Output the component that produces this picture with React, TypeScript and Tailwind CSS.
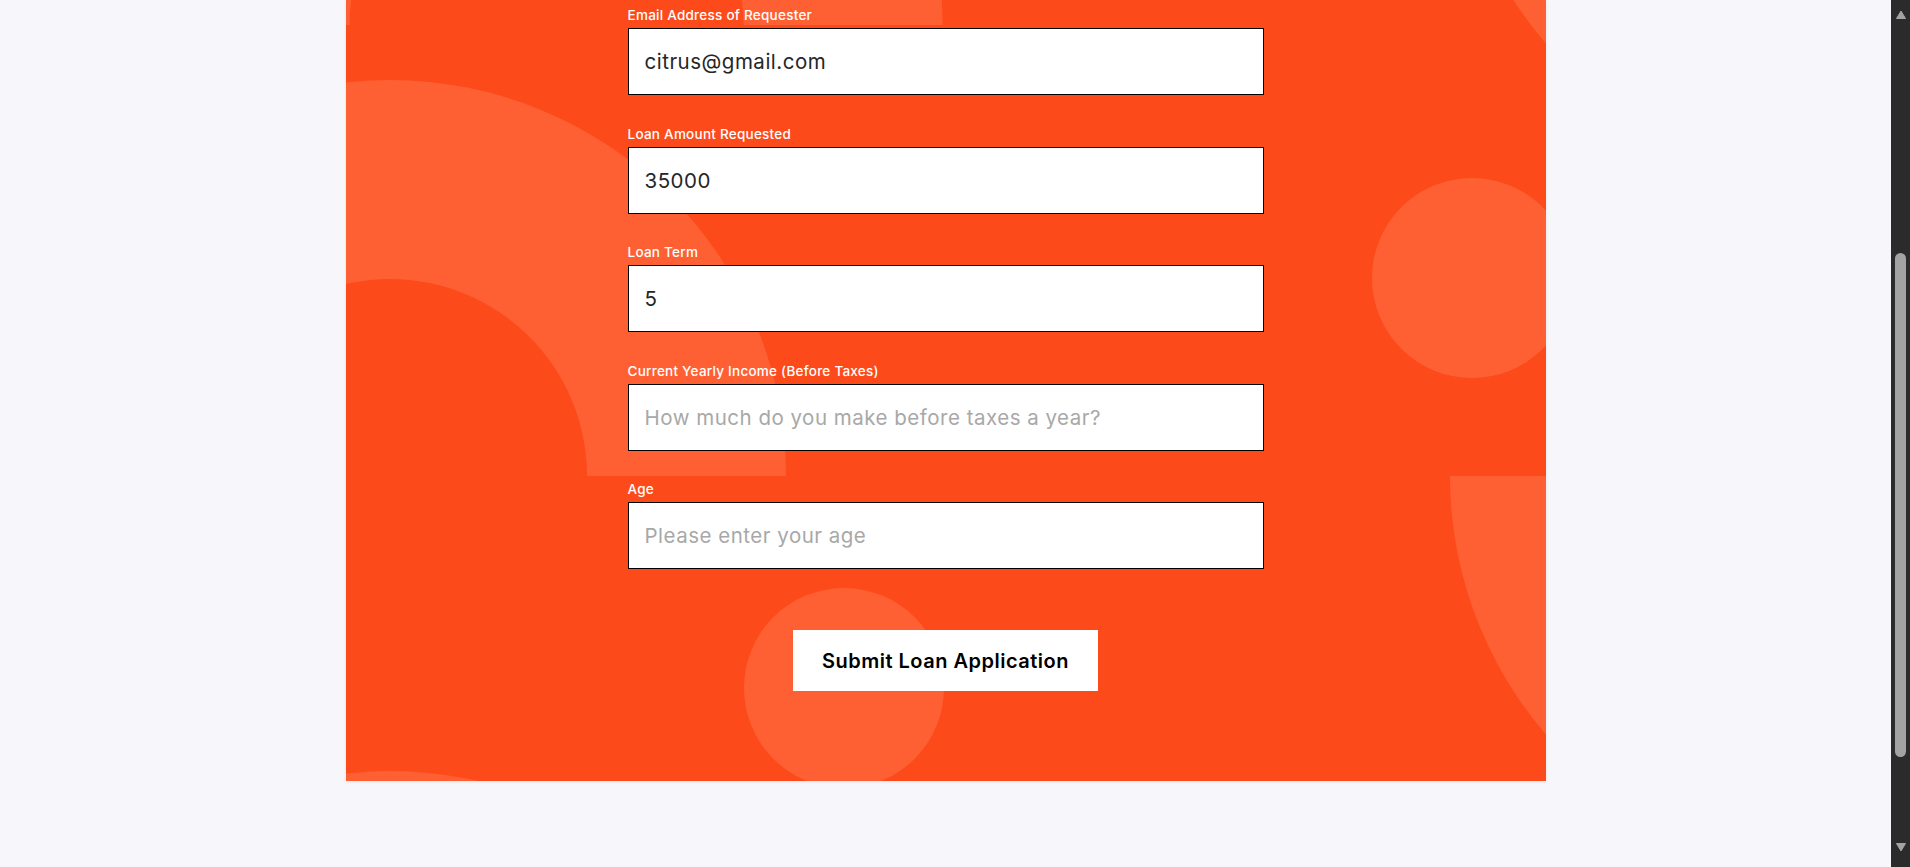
import React from "react";

const fields: { label: string; value?: string; placeholder?: string }[] = [
  { label: "Email Address of Requester", value: "citrus@gmail.com" },
  { label: "Loan Amount Requested", value: "35000" },
  { label: "Loan Term", value: "5" },
  { label: "Current Yearly Income (Before Taxes)", placeholder: "How much do you make before taxes a year?" },
  { label: "Age", placeholder: "Please enter your age" },
];

function Shapes() {
  return (
    <svg
      className="absolute inset-0 w-full h-full"
      viewBox="0 0 1200 781"
      preserveAspectRatio="none"
      aria-hidden="true"
    >
      <g fill="#fe6034">
        <path d="M -195.5 25 A 396 396 0 0 1 596.5 25 L 397.5 25 A 197 197 0 0 0 3.5 25 Z" />
        <path d="M -352 476 A 396 396 0 0 1 440 476 L 241 476 A 197 197 0 0 0 -153 476 Z" />
        <path d="M -352 1167 A 396 396 0 0 1 440 1167 L 241 1167 A 197 197 0 0 0 -153 1167 Z" />
        <path d="M 1104 476 A 396 396 0 0 0 1896 476 L 1697 476 A 197 197 0 0 1 1303 476 Z" />
        <path d="M 1104 -215 A 396 396 0 0 0 1896 -215 L 1697 -215 A 197 197 0 0 1 1303 -215 Z" />
        <circle cx="1126" cy="278" r="100" />
        <circle cx="498" cy="688" r="100" />
      </g>
    </svg>
  );
}

function ScrollBar() {
  return (
    <div className="w-[19px] h-full bg-[#2b2b2b] flex flex-col items-center shrink-0">
      <svg className="mt-[10px] w-[10px] h-[9px]" viewBox="0 0 10 9">
        <path d="M5 1 L9.5 8.5 L0.5 8.5 Z" fill="#a3a3a3" stroke="#a3a3a3" strokeLinejoin="round" strokeWidth="1" />
      </svg>
      <div className="mt-[234px] w-[11px] h-[504px] rounded-full bg-[#a3a3a3]" />
      <svg className="mt-[86px] w-[10px] h-[9px]" viewBox="0 0 10 9">
        <path d="M0.5 0.5 L9.5 0.5 L5 8 Z" fill="#a3a3a3" stroke="#a3a3a3" strokeLinejoin="round" strokeWidth="1" />
      </svg>
    </div>
  );
}

export default function App() {
  return (
    <div className="h-[867px] w-full flex overflow-hidden bg-[#f6f6fb] font-['Inter',sans-serif]">
      <div className="flex-1 flex flex-col items-center">
        <section className="relative w-[1200px] h-[781px] overflow-hidden bg-[#fd4a1a] shadow-[0_1px_3px_rgba(0,0,0,0.08)]">
          <Shapes />
          <form
            className="relative z-10 mx-auto w-[636px] pt-[4px] flex flex-col"
            onSubmit={(e) => e.preventDefault()}
          >
            {fields.map((f, i) => (
              <div key={f.label} className={i < fields.length - 1 ? "flex flex-col mb-[27.5px]" : "flex flex-col"}>
                <label className="h-[20px] leading-[22px] text-[13.5px] tracking-[0.25px] font-medium text-white">
                  {f.label}
                </label>
                <input
                  className="mt-[4px] h-[67px] w-full border border-black bg-white px-[16px] text-[20.5px] tracking-[0.5px] text-[#262626] placeholder:text-[#a8a8a8] outline-none"
                  defaultValue={f.value}
                  placeholder={f.placeholder}
                />
              </div>
            ))}
            <div className="flex justify-center mt-[61px]">
              <button
                type="submit"
                className="w-[305px] h-[61px] bg-white text-black text-[20px] tracking-[0.5px] font-semibold"
              >
                Submit Loan Application
              </button>
            </div>
          </form>
        </section>
      </div>
      <ScrollBar />
    </div>
  );
}
